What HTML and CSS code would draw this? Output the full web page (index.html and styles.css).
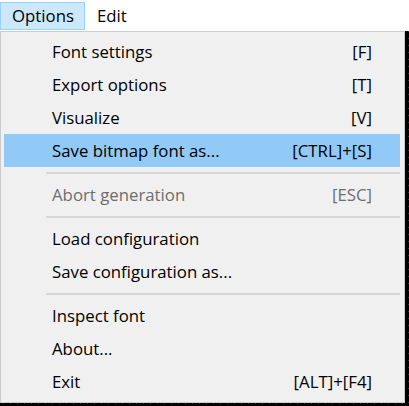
FILE: index.html
```html
<!DOCTYPE html>
<html lang="en">
<head>
<meta charset="utf-8">
<title>Options menu</title>
<link rel="stylesheet" href="styles.css">
</head>
<body>
<div class="menubar">
  <div class="menubar-item active">Options</div>
  <div class="menubar-item">Edit</div>
</div>
<div class="menu">
  <div class="item"><span class="label">Font settings</span><span class="key">[F]</span></div>
  <div class="item"><span class="label">Export options</span><span class="key">[T]</span></div>
  <div class="item"><span class="label">Visualize</span><span class="key">[V]</span></div>
  <div class="item hover"><span class="label">Save bitmap font as...</span><span class="key">[CTRL]+[S]</span></div>
  <div class="sep"></div>
  <div class="item disabled"><span class="label">Abort generation</span><span class="key">[ESC]</span></div>
  <div class="sep"></div>
  <div class="item"><span class="label">Load configuration</span></div>
  <div class="item"><span class="label">Save configuration as...</span></div>
  <div class="sep"></div>
  <div class="item"><span class="label">Inspect font</span></div>
  <div class="item"><span class="label">About...</span></div>
  <div class="item"><span class="label">Exit</span><span class="key">[ALT]+[F4]</span></div>
</div>
</body>
</html>
```
FILE: styles.css
```css
html, body {
  margin: 0;
  padding: 0;
}
body {
  width: 409px;
  height: 406px;
  overflow: hidden;
  background-color: #000;
  background-image: radial-gradient(circle, #6a6a6a 0.8px, transparent 1.2px);
  background-size: 7px 7px;
  font-family: "Open Sans", "Noto Sans", sans-serif;
  font-size: 16.8px;
  color: #000;
}
.menubar {
  height: 31px;
  background: #fff;
  display: flex;
  align-items: flex-start;
  padding-top: 2px;
  box-sizing: border-box;
}
.menubar-item {
  height: 28px;
  line-height: 26px;
  padding: 0 10px 0 11px;
  border: 1px solid transparent;
  box-sizing: border-box;
}
.menubar-item.active {
  background: #cce8ff;
  border-color: #99d1ff;
}
.menu {
  width: 405px;
  box-sizing: border-box;
  border: 1px solid #cccccc;
  background: #f0f0f0;
  padding: 3px 4px 4px 3px;
}
.item {
  height: 33px;
  display: flex;
  align-items: center;
  justify-content: space-between;
  padding: 0 28px 1px 48px;
  box-sizing: border-box;
}
.item.hover {
  background: #91c9f7;
}
.item.disabled {
  color: #6d6d6d;
}
.sep {
  height: 11px;
  display: flex;
  align-items: center;
  padding-left: 42px;
}
.sep::before {
  content: "";
  display: block;
  width: 100%;
  height: 2px;
  background: #d7d7d7;
}
```
